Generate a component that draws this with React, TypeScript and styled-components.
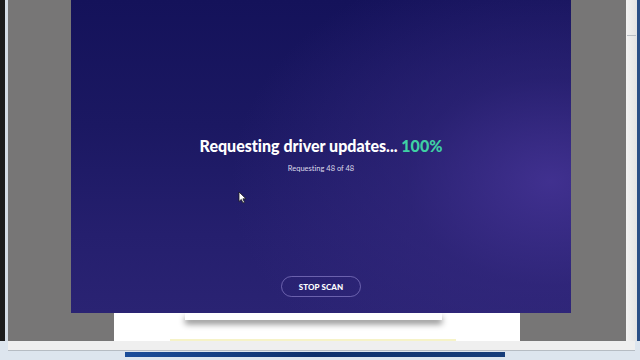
import React from "react";
import styled, { createGlobalStyle } from "styled-components";

const GlobalStyle = createGlobalStyle`
  html, body {
    margin: 0;
    padding: 0;
    background: #dce4ec;
    overflow: hidden;
  }
`;

const Screen = styled.div`
  width: 640px;
  height: 360px;
  display: flex;
  flex-direction: column;
  background: #dde5ee;
  font-family: "Lato", "Open Sans", sans-serif;
  font-variant-ligatures: none;
  position: relative;
  overflow: hidden;
`;

const WindowRow = styled.div`
  display: flex;
  height: 341px;
`;

const DarkEdge = styled.div<{ $w: number; $color: string }>`
  width: ${(p) => p.$w}px;
  background: ${(p) => p.$color};
  flex-shrink: 0;
`;

const Viewport = styled.div`
  flex: 1;
  display: flex;
  flex-direction: column;
  background: #777676;
`;

const TopRow = styled.div`
  display: flex;
  height: 313px;
  padding-left: 63px;
`;

const Panel = styled.div`
  width: 500px;
  height: 313px;
  display: flex;
  flex-direction: column;
  align-items: center;
  position: relative;
  background: radial-gradient(
      ellipse 320px 230px at 96% 58%,
      rgba(70, 52, 150, 0.85) 0%,
      rgba(55, 42, 130, 0.5) 45%,
      rgba(40, 32, 110, 0) 100%
    ),
    linear-gradient(180deg, #14125a 0%, #1b1862 40%, #251f6e 75%, #2a2373 100%);
`;

const Title = styled.h1`
  margin: 135px 0 0;
  font-size: 16px;
  font-weight: 900;
  color: #ffffff;
  line-height: 22px;
`;

const Percent = styled.span`
  color: #3fd0a4;
`;

const Sub = styled.p`
  margin: 6px 0 0;
  font-size: 7.5px;
  color: #dcdaea;
  line-height: 12px;
`;

const StopButton = styled.button`
  margin-top: 101px;
  width: 80px;
  height: 21px;
  border-radius: 11px;
  border: 1px solid rgba(160, 150, 220, 0.55);
  background: transparent;
  color: #ffffff;
  font-family: inherit;
  font-size: 8px;
  font-weight: 900;
  letter-spacing: 0.1px;
  padding: 0;
`;

const Cursor = styled.svg`
  position: absolute;
  left: 167px;
  top: 191px;
`;

const BottomRow = styled.div`
  display: flex;
  height: 28px;
  padding-left: 106px;
`;

const Paper = styled.div`
  width: 406px;
  background: #ffffff;
  display: flex;
  flex-direction: column;
  align-items: flex-start;
  padding-left: 71px;
  box-sizing: border-box;
`;

const Card = styled.div`
  width: 257px;
  height: 7px;
  background: #ffffff;
  box-shadow: 0 4px 6px rgba(0, 0, 0, 0.45);
`;

const PaperLine = styled.div`
  margin-top: auto;
  margin-left: -15px;
  width: 286px;
  height: 2px;
  background: #f6f3c8;
`;

const VScroll = styled.div`
  width: 11px;
  background: linear-gradient(90deg, #f2f2f2, #e3e3e3);
  display: flex;
  flex-direction: column;
  align-items: center;
  padding-top: 25px;
  box-sizing: border-box;
`;

const Thumb = styled.div`
  width: 9px;
  height: 10px;
  border-bottom: 1px solid #b9bec4;
`;

const HScroll = styled.div`
  height: 9px;
  margin-left: 8px;
  margin-right: 5px;
  background: #efefef;
  border-bottom: 1px solid #b6bcc3;
`;

const TaskStrip = styled.div`
  display: flex;
  height: 5px;
  margin-top: 1px;
  padding-left: 125px;
`;

const TaskBlue = styled.div`
  width: 380px;
  background: linear-gradient(90deg, #1b4d9a, #0d2f6b 50%, #163d7a);
`;

const App: React.FC = () => {
  return (
    <Screen>
      <GlobalStyle />
      <WindowRow>
        <DarkEdge $w={5} $color="#1c1c1c" />
        <DarkEdge $w={3} $color="#d5dde6" />
        <Viewport>
          <TopRow>
            <Panel>
              <Title>
                Requesting driver updates... <Percent>100%</Percent>
              </Title>
              <Sub>Requesting 48 of 48</Sub>
              <StopButton>STOP SCAN</StopButton>
              <Cursor width="9" height="13" viewBox="0 0 9 13">
                <path
                  d="M1 1 L1 10.5 L3.3 8.4 L5 12 L6.5 11.3 L4.9 7.8 L8 7.8 Z"
                  fill="#ffffff"
                  stroke="#1a1a1a"
                  strokeWidth="0.8"
                />
              </Cursor>
            </Panel>
          </TopRow>
          <BottomRow>
            <Paper>
              <Card />
              <PaperLine />
            </Paper>
          </BottomRow>
        </Viewport>
        <VScroll>
          <Thumb />
        </VScroll>
        <DarkEdge $w={3} $color="#2a4f86" />
      </WindowRow>
      <HScroll />
      <TaskStrip>
        <TaskBlue />
      </TaskStrip>
    </Screen>
  );
};

export default App;
